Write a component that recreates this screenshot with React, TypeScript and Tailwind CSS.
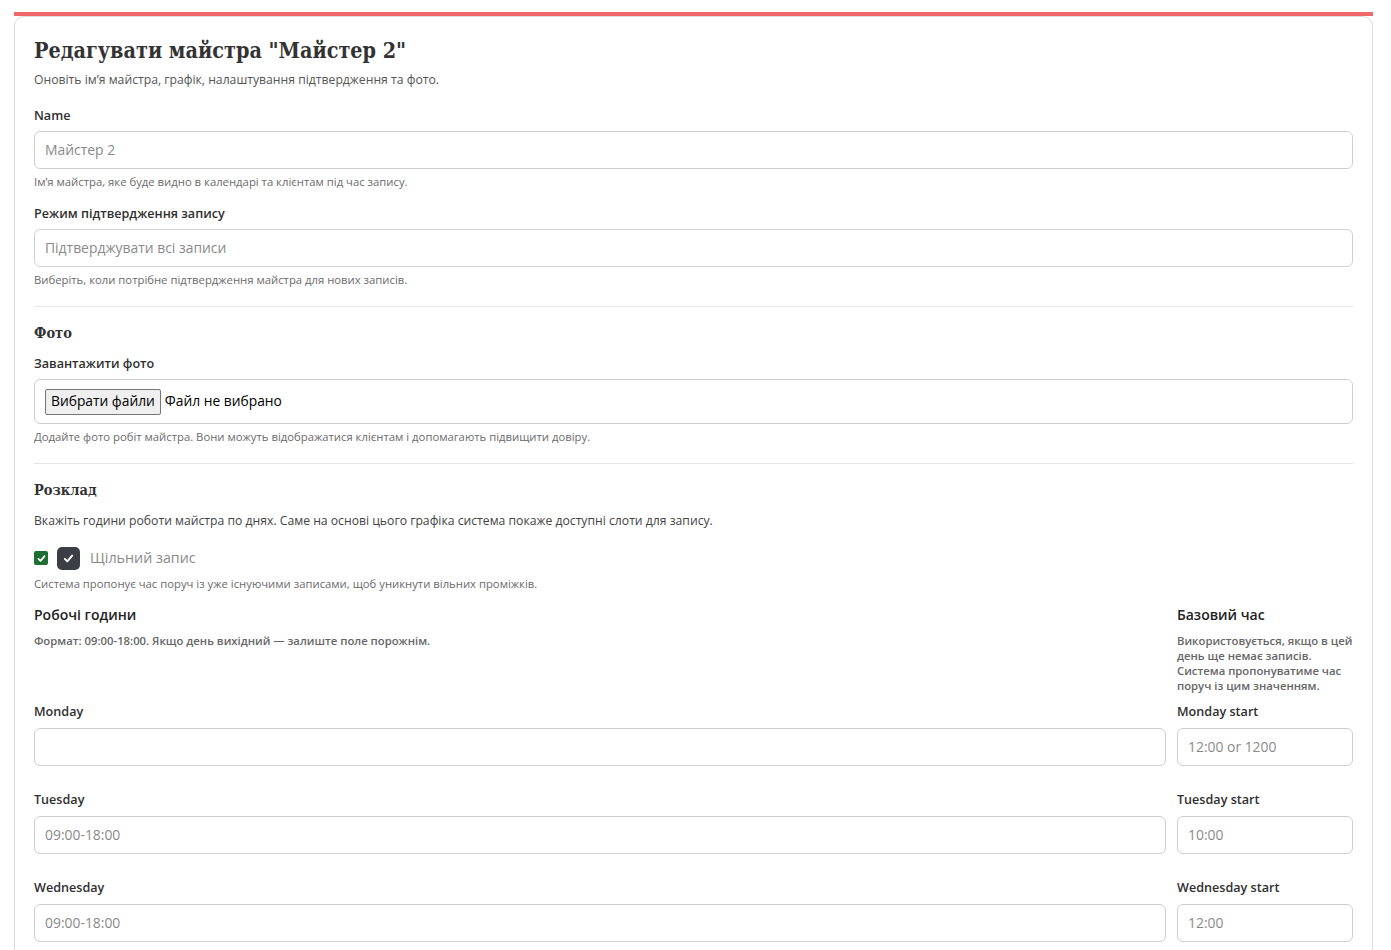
import React from "react";

const Check = ({ className }: { className?: string }) => (
  <svg viewBox="0 0 16 16" className={className} fill="none">
    <path d="M3.5 8.5l3 3 6-7" stroke="currentColor" strokeWidth="2.4" strokeLinecap="round" strokeLinejoin="round" />
  </svg>
);

const Field = ({
  label,
  placeholder,
  help,
}: {
  label: string;
  placeholder: string;
  help: string;
}) => (
  <div className="mb-[15px]">
    <div className="text-[12.6px] leading-[18px] font-semibold text-[#2f2f2f] mb-[6px]">{label}</div>
    <div className="h-[38px] border border-[#cfcfcf] rounded-[6px] flex items-center px-[10px] text-[13.9px] text-[#8a8a8a]">
      {placeholder}
    </div>
    <div className="mt-[5px] text-[11.3px] leading-[16px] text-[#6b6b6b]">{help}</div>
  </div>
);

const days = [
  { day: "Monday", hours: "", start: "12:00 or 1200" },
  { day: "Tuesday", hours: "09:00-18:00", start: "10:00" },
  { day: "Wednesday", hours: "09:00-18:00", start: "12:00" },
];

const Slab = "font-['DejaVu_Serif_Condensed','DejaVu_Serif',serif]";

export default function App() {
  return (
    <div className="min-h-[950px] bg-white pt-[12px] pl-[14px] pr-[18px] font-['Open_Sans',sans-serif] text-[#333]">
      <div className="h-[4px] bg-[#ef6767]" />
      <div className="border border-[#dcdcdc] rounded-[10px] px-[19px] pt-[20px] pb-8">
        {/* Заголовок */}
        <h1 className={`${Slab} text-[21.4px] leading-[28px] font-bold text-[#333]`}>
          Редагувати майстра "Майстер 2"
        </h1>
        <p className="mt-[6px] text-[12.2px] leading-[18px] text-[#555]">
          Оновіть ім’я майстра, графік, налаштування підтвердження та фото.
        </p>

        <div className="mt-[18px]">
          <Field
            label="Name"
            placeholder="Майстер 2"
            help="Ім’я майстра, яке буде видно в календарі та клієнтам під час запису."
          />
          <Field
            label="Режим підтвердження запису"
            placeholder="Підтверджувати всі записи"
            help="Виберіть, коли потрібне підтвердження майстра для нових записів."
          />
        </div>

        <div className="mt-[18px] border-t border-[#e6e6e6]" />

        {/* Фото */}
        <h2 className={`${Slab} mt-[16px] text-[14.5px] leading-[20px] font-bold text-[#333]`}>Фото</h2>
        <div className="mt-[12px] text-[12.6px] leading-[18px] font-semibold text-[#2f2f2f] mb-[6px]">
          Завантажити фото
        </div>
        <div className="h-[45px] border border-[#cfcfcf] rounded-[6px] flex items-center px-[10px] text-[13.8px] text-black">
          <span className="h-[26px] px-[5px] flex items-center border border-[#767676] bg-[#efefef] rounded-[2px]">
            Вибрати файли
          </span>
          <span className="ml-[4px]">Файл не вибрано</span>
        </div>
        <div className="mt-[5px] text-[11.3px] leading-[16px] text-[#6b6b6b]">
          Додайте фото робіт майстра. Вони можуть відображатися клієнтам і допомагають підвищити довіру.
        </div>

        <div className="mt-[18px] border-t border-[#e6e6e6]" />

        {/* Розклад */}
        <h2 className={`${Slab} mt-[16px] text-[14.5px] leading-[20px] font-bold text-[#333]`}>Розклад</h2>
        <p className="mt-[12px] text-[12.2px] leading-[18px] text-[#444]">
          Вкажіть години роботи майстра по днях. Саме на основі цього графіка система покаже доступні слоти для запису.
        </p>

        <div className="mt-[16px] flex items-center h-[24px]">
          <span className="w-[14px] h-[14px] rounded-[2px] bg-[#1e6e32] text-white flex items-center justify-center">
            <Check className="w-[11px] h-[11px]" />
          </span>
          <span className="ml-[9px] w-[23px] h-[23px] rounded-[5px] bg-[#3b3f45] text-white flex items-center justify-center">
            <Check className="w-[13px] h-[13px]" />
          </span>
          <span className="ml-[10px] text-[14.3px] text-[#8a8a8a]">Щільний запис</span>
        </div>
        <div className="mt-[6px] text-[11.3px] leading-[16px] text-[#6b6b6b]">
          Система пропонує час поруч із уже існуючими записами, щоб уникнути вільних проміжків.
        </div>

        {/* Робочі години */}
        <div className="mt-[13px] grid grid-cols-[1fr_176px] gap-x-[11px]">
          <div>
            <div className="text-[14px] leading-[20px] font-semibold text-[#222]">Робочі години</div>
            <div className="mt-[8px] text-[11.3px] leading-[15px] font-semibold text-[#666]">
              Формат: 09:00-18:00. Якщо день вихідний — залиште поле порожнім.
            </div>
          </div>
          <div>
            <div className="text-[14px] leading-[20px] font-semibold text-[#222]">Базовий час</div>
            <div className="mt-[8px] text-[11.3px] leading-[15px] font-semibold text-[#666]">
              Використовується, якщо в цей день ще немає записів. Система пропонуватиме час поруч із цим значенням.
            </div>
          </div>
        </div>

        <div className="mt-[10px] grid grid-cols-[1fr_176px] gap-x-[11px] gap-y-[25px]">
          {days.map((d) => (
            <React.Fragment key={d.day}>
              <div>
                <div className="text-[12.6px] leading-[18px] font-semibold text-[#2f2f2f] mb-[7px]">{d.day}</div>
                <div className="h-[38px] border border-[#cfcfcf] rounded-[6px] flex items-center px-[10px] text-[13.9px] text-[#8a8a8a]">
                  {d.hours}
                </div>
              </div>
              <div>
                <div className="text-[12.6px] leading-[18px] font-semibold text-[#2f2f2f] mb-[7px]">{d.day} start</div>
                <div className="h-[38px] border border-[#cfcfcf] rounded-[6px] flex items-center px-[10px] text-[13.9px] text-[#8a8a8a]">
                  {d.start}
                </div>
              </div>
            </React.Fragment>
          ))}
        </div>
      </div>
    </div>
  );
}
